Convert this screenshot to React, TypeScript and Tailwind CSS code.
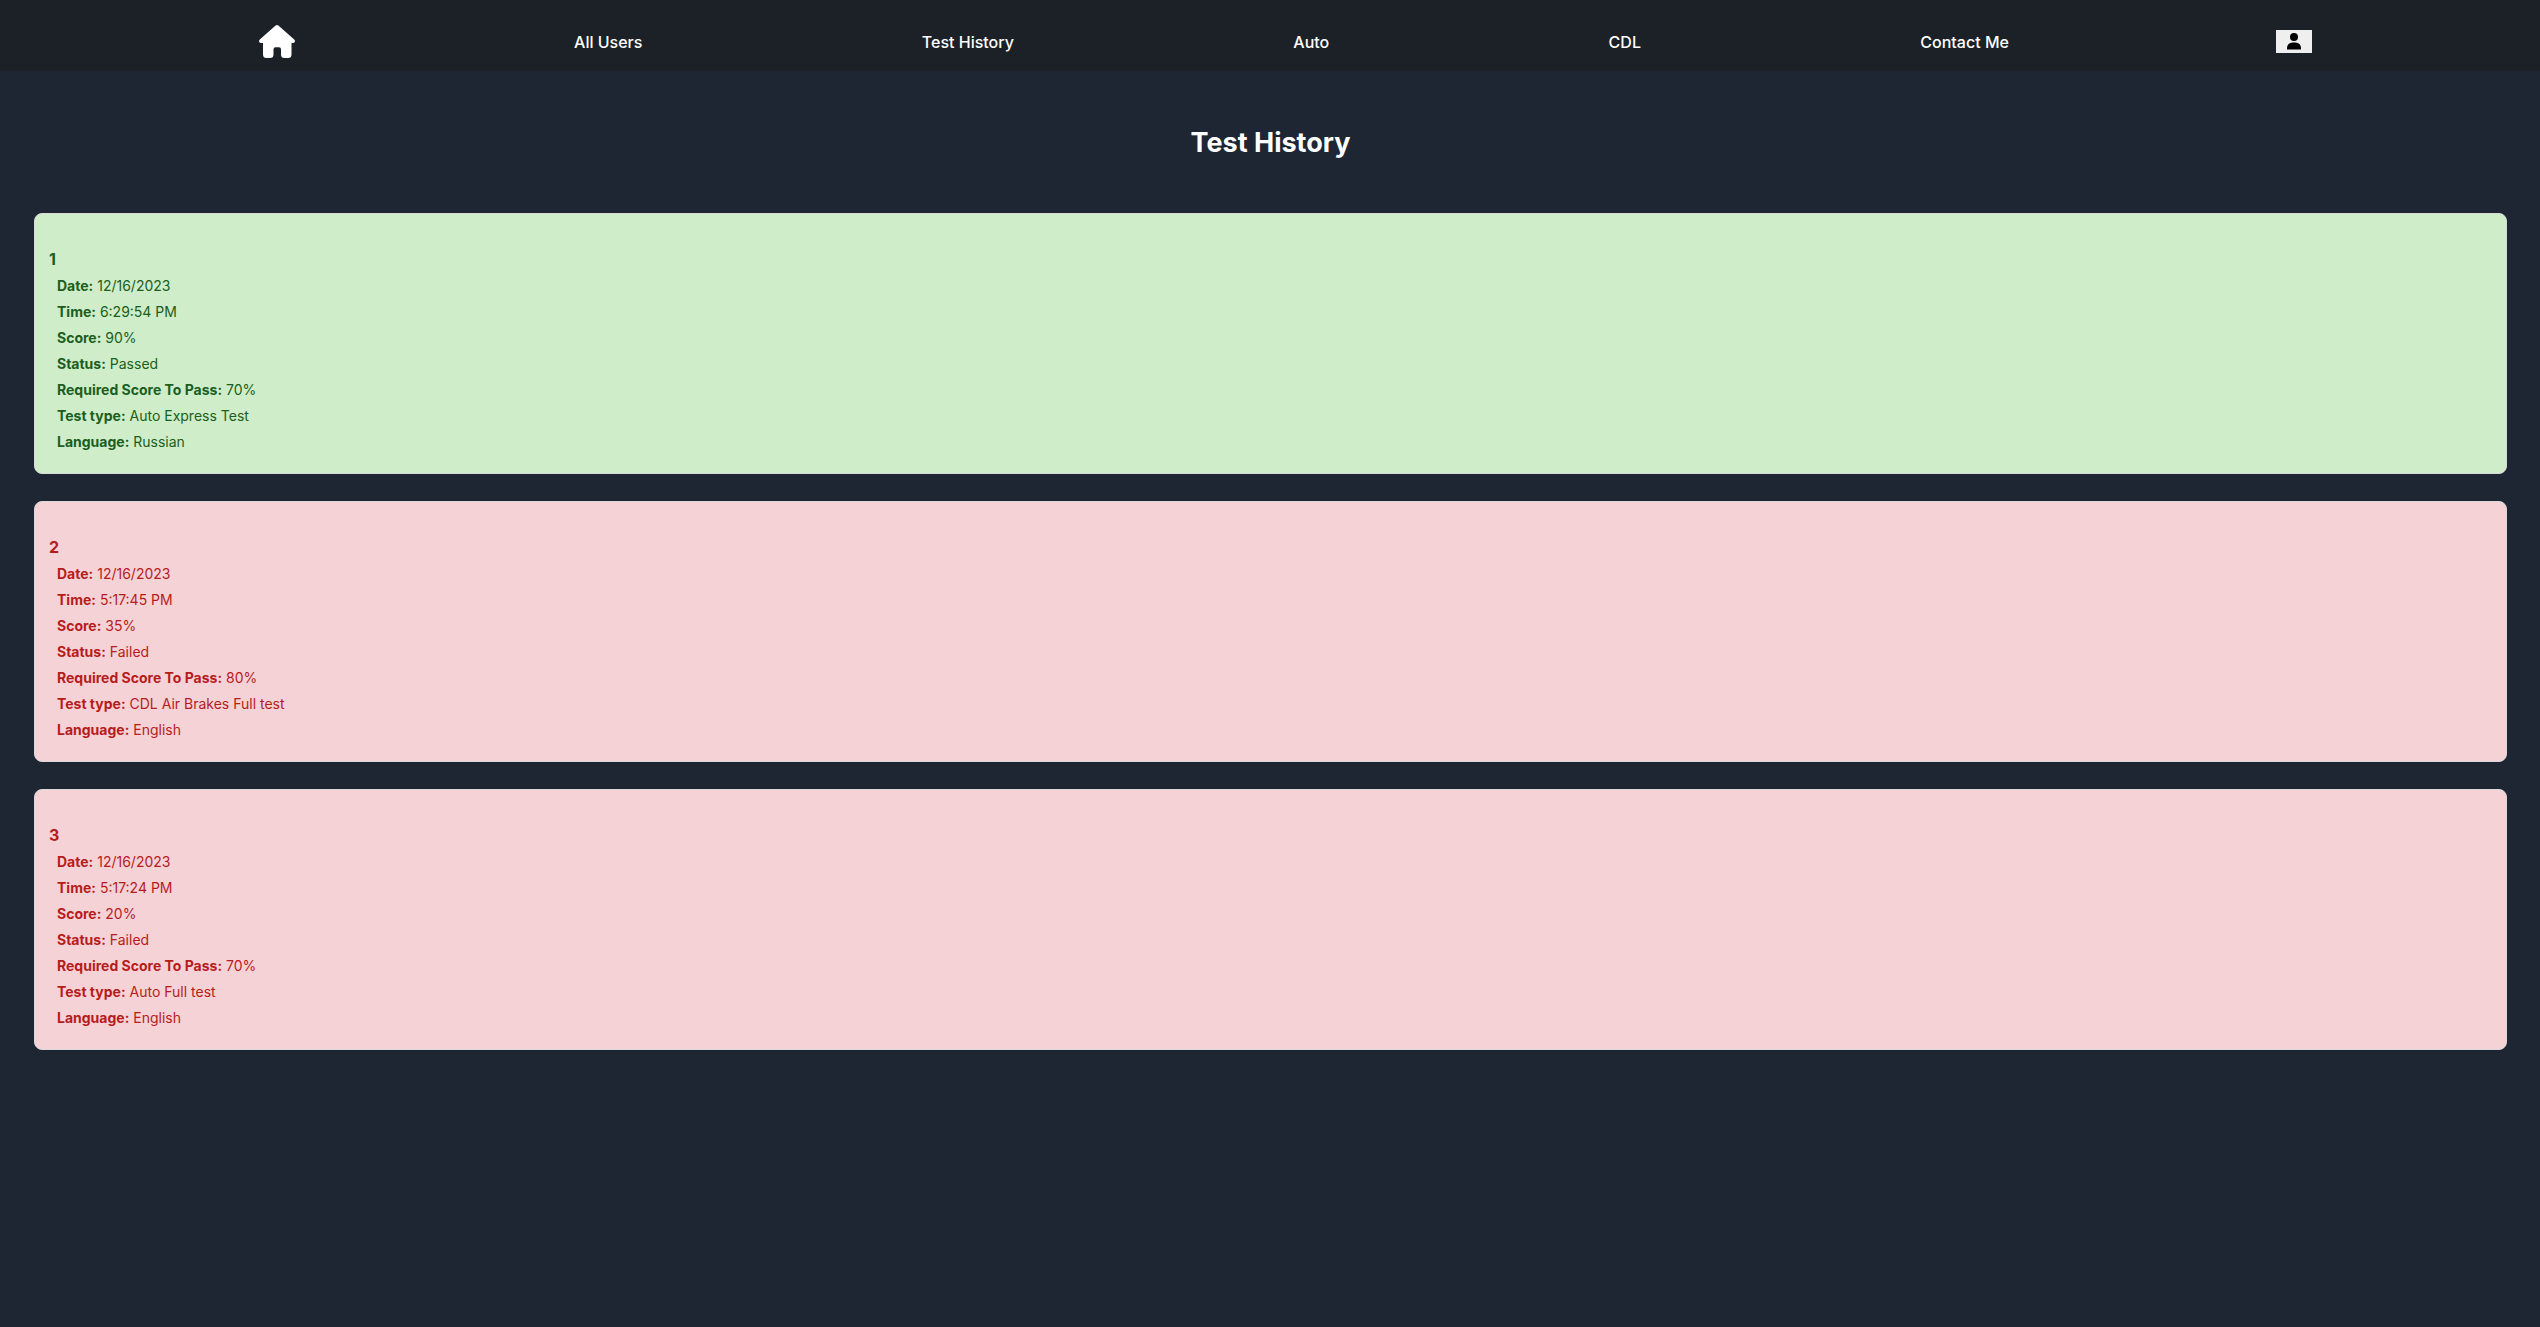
import React from "react";

type Result = {
  date: string;
  time: string;
  score: string;
  status: "Passed" | "Failed";
  required: string;
  type: string;
  language: string;
};

const results: Result[] = [
  { date: "12/16/2023", time: "6:29:54 PM", score: "90%", status: "Passed", required: "70%", type: "Auto Express Test", language: "Russian" },
  { date: "12/16/2023", time: "5:17:45 PM", score: "35%", status: "Failed", required: "80%", type: "CDL Air Brakes Full test", language: "English" },
  { date: "12/16/2023", time: "5:17:24 PM", score: "20%", status: "Failed", required: "70%", type: "Auto Full test", language: "English" },
];

const links = ["All Users", "Test History", "Auto", "CDL", "Contact Me"];

function HomeIcon() {
  return (
    <svg viewBox="0 0 36 33" className="h-[33px] w-9" fill="currentColor" aria-hidden="true">
      <path d="M16.6.6a2.2 2.2 0 0 1 2.8 0L35.2 14.6a1.9 1.9 0 0 1-1.2 3.4H32.500V29.500a3.500 3.500 0 0 1-3.500 3.500H25.500a3.500 3.500 0 0 1-3.500-3.500V24.300a2 2 0 0 0-2-2H16.500a2 2 0 0 0-2 2V29.500a3.500 3.500 0 0 1-3.500 3.500H7.500a3.500 3.500 0 0 1-3.500-3.500V18H2A1.900 1.900 0 0 1 .8 14.600Z" />
    </svg>
  );
}

function UserIcon() {
  return (
    <svg viewBox="0 0 14 17" className="h-[17px] w-3.5" fill="currentColor" aria-hidden="true">
      <circle cx="7" cy="4" r="4" />
      <path d="M0 16.5V15a5.500 5.500 0 0 1 5.500-5.500h3A5.500 5.500 0 0 1 14 15v1.500Z" />
    </svg>
  );
}

function Row({ label, value }: { label: string; value: string }) {
  return (
    <li>
      <strong className="font-bold">{label}:</strong> {value}
    </li>
  );
}

function ResultCard({ result, index }: { result: Result; index: number }) {
  const tone =
    result.status === "Passed" ? "bg-[#ceedc8] text-[#1b5e20]" : "bg-[#f5d2d6] text-[#b71c1c]";
  return (
    <article className={`rounded-lg border border-[#d9d9d9] px-3.5 pt-8 pb-[18px] ${tone}`}>
      <h2 className="text-base leading-[27px] font-bold">{index}</h2>
      <ul className="pl-2 text-sm leading-[26px]">
        <Row label="Date" value={result.date} />
        <Row label="Time" value={result.time} />
        <Row label="Score" value={result.score} />
        <Row label="Status" value={result.status} />
        <Row label="Required Score To Pass" value={result.required} />
        <Row label="Test type" value={result.type} />
        <Row label="Language" value={result.language} />
      </ul>
    </article>
  );
}

export default function App() {
  return (
    <div className="min-h-screen bg-[#1f2633] font-['Inter',sans-serif]">
      <header className="bg-[#1c2127] text-white">
        <nav className="flex h-[71px] items-center justify-around pt-3 pr-[88px] pl-[119px]">
          <a href="#home" aria-label="Home">
            <HomeIcon />
          </a>
          {links.map((l) => (
            <a key={l} href="#" className="text-base font-medium">
              {l}
            </a>
          ))}
          <button type="button" aria-label="Account" className="-ml-3 flex h-[23px] w-9 items-center justify-center bg-[#efefef] text-black">
            <UserIcon />
          </button>
        </nav>
      </header>
      <main className="pt-[54px] pr-[33px] pl-[34px]">
        <h1 className="text-center text-[27px] leading-9 font-bold text-white">Test History</h1>
        <div className="mt-[52px] flex flex-col gap-[27px]">
          {results.map((r, i) => (
            <ResultCard key={i} result={r} index={i + 1} />
          ))}
        </div>
      </main>
    </div>
  );
}
